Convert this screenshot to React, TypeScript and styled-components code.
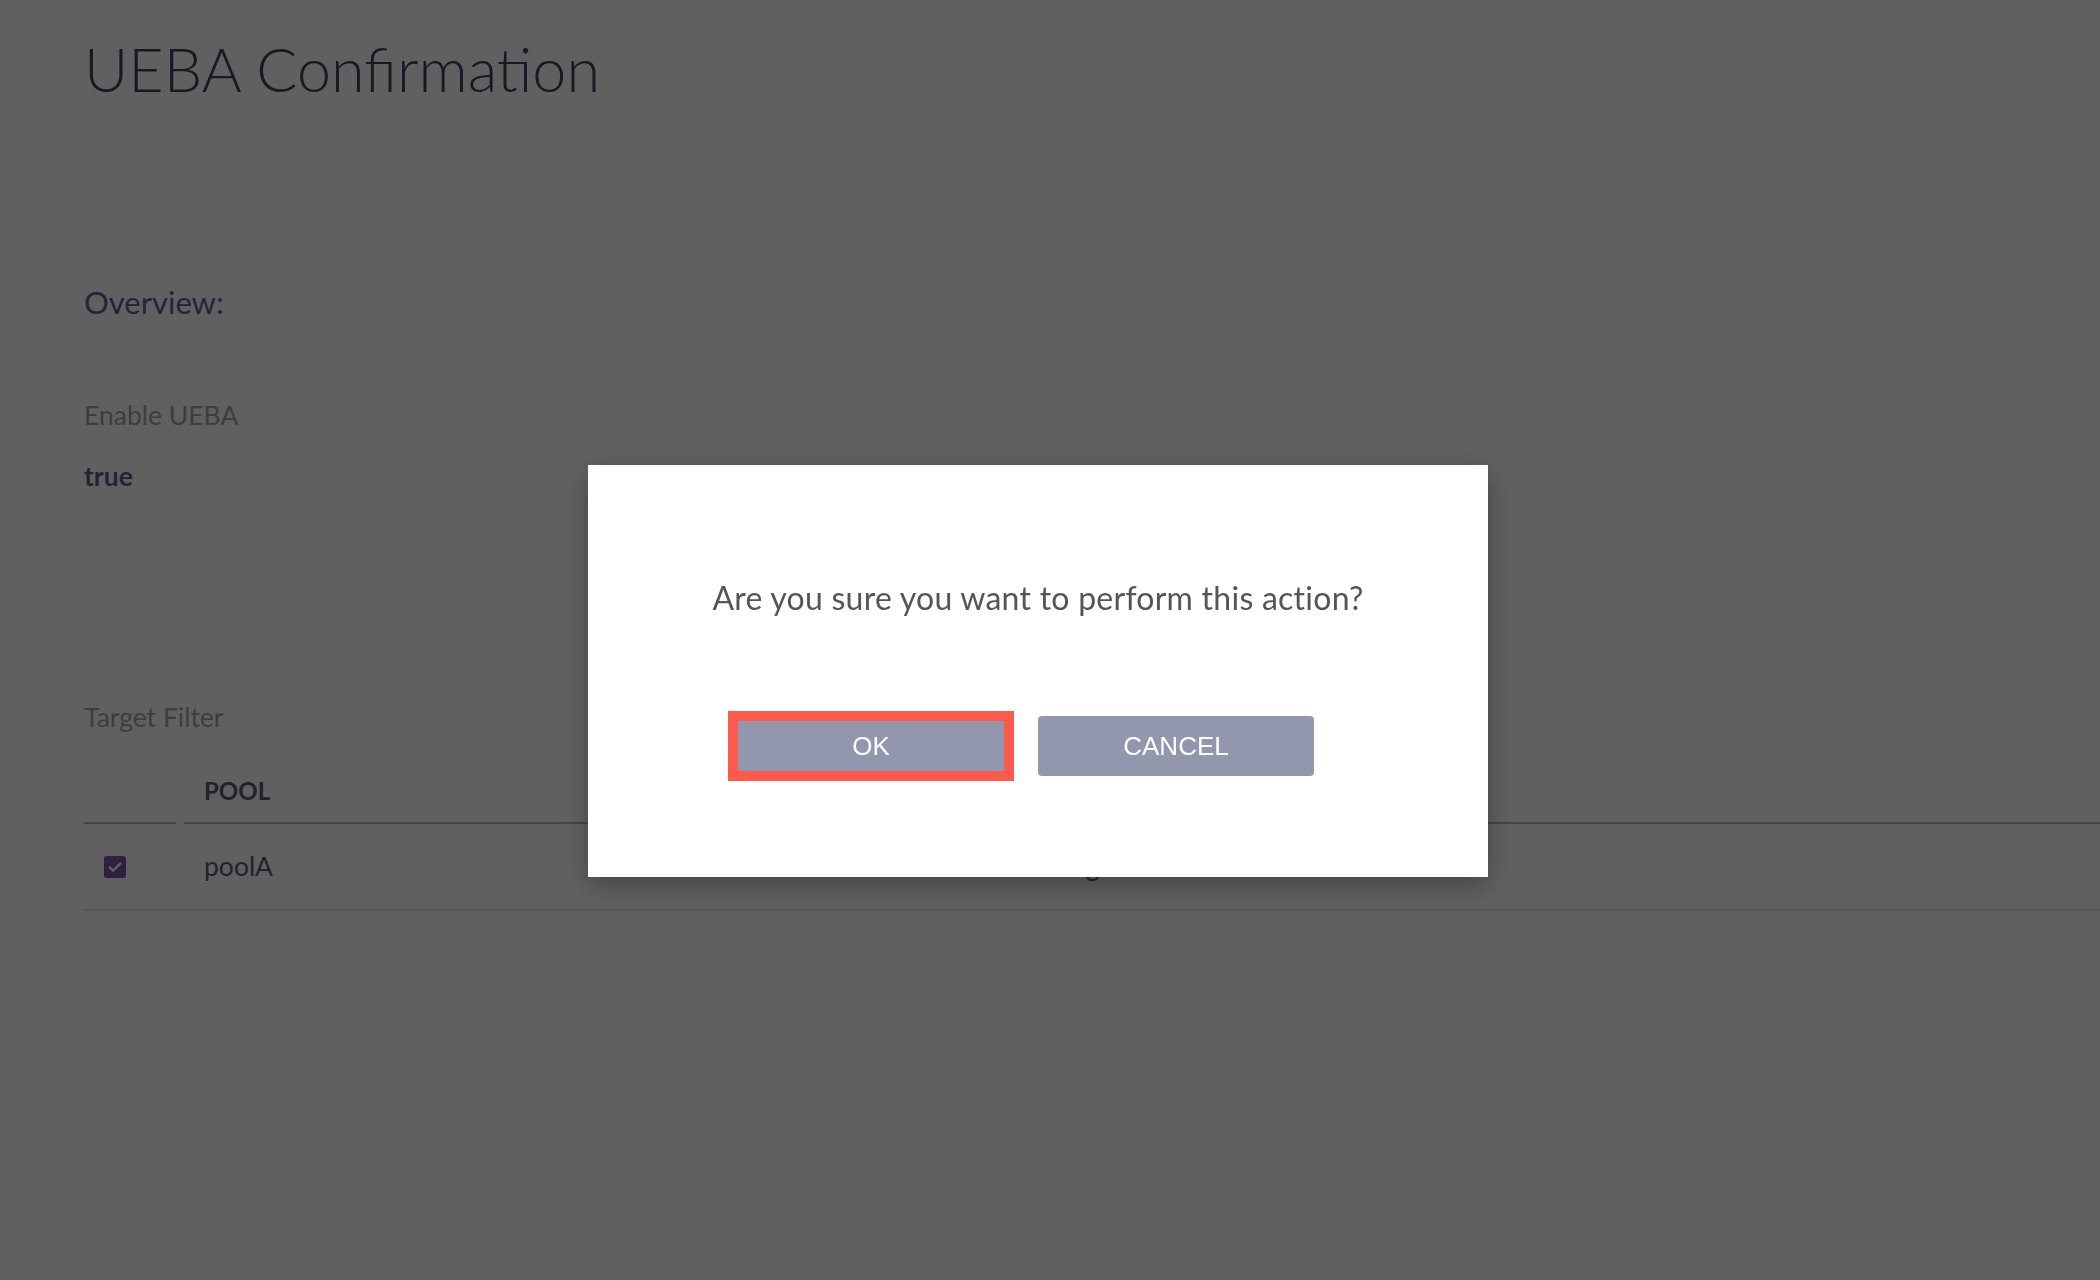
import React from "react";
import styled, { createGlobalStyle } from "styled-components";

// the page sits under a dark scrim, so the page colours below are the
// un-dimmed ones; the scrim takes them down to what the screenshot shows
const GlobalStyle = createGlobalStyle`
  html,
  body {
    margin: 0;
    padding: 0;
    background: #ffffff;
  }

  body {
    font-family: Lato, "Open Sans", sans-serif;
  }
`;

const Page = styled.main`
  box-sizing: border-box;
  min-height: 1280px;
  padding: 33px 0 0 84px;
`;

const Title = styled.h1`
  margin: 0;
  font-size: 61px;
  font-weight: 300;
  line-height: 72px;
  color: #44445f;
`;

const SectionTitle = styled.h2`
  margin: 179px 0 0;
  font-size: 31px;
  font-weight: 400;
  line-height: 36px;
  color: #5c6690;
`;

const FieldLabel = styled.div<{ $gap: number }>`
  margin-top: ${(props) => props.$gap}px;
  font-size: 26.5px;
  line-height: 31px;
  color: #a4a4a4;
`;

const FieldValue = styled.div`
  margin-top: 30px;
  font-size: 26.5px;
  font-weight: 700;
  line-height: 31px;
  color: #5e6088;
`;

const Table = styled.div`
  margin-top: 43px;
`;

const HeaderRow = styled.div`
  display: grid;
  grid-template-columns: 92px 848px 1fr;
  column-gap: 8px;
`;

const HeaderCell = styled.div`
  height: 46px;
  padding-left: 20px;
  font-size: 24px;
  font-weight: 700;
  line-height: 29px;
  color: #5a5a78;
  border-bottom: 2px solid #b8b8b8;
`;

const BodyRow = styled.div`
  display: grid;
  grid-template-columns: 92px 848px 1fr;
  column-gap: 8px;
  align-items: center;
  height: 85px;
  border-bottom: 2px solid #e8e8e8;
`;

const BodyCell = styled.div`
  padding-left: 20px;
  font-size: 26.5px;
  line-height: 31px;
  color: #5a5a78;
`;

const CheckBox = styled.span`
  display: flex;
  align-items: center;
  justify-content: center;
  width: 22px;
  height: 22px;
  background: #7a55a8;
  border-radius: 3px;
`;

const Scrim = styled.div`
  position: fixed;
  inset: 0;
  display: flex;
  align-items: flex-start;
  justify-content: center;
  box-sizing: border-box;
  padding: 465px 24px 0 0;
  background: rgba(0, 0, 0, 0.624);
`;

const Dialog = styled.div`
  box-sizing: border-box;
  width: 900px;
  height: 412px;
  padding-top: 115px;
  text-align: center;
  background: #ffffff;
  box-shadow: 0 8px 24px rgba(0, 0, 0, 0.3);
`;

const Message = styled.p`
  margin: 0 0 100px;
  font-size: 32px;
  font-weight: 400;
  line-height: 36px;
  letter-spacing: 0.25px;
  color: #555555;
`;

const Actions = styled.div`
  display: flex;
  justify-content: center;
`;

const ActionButton = styled.button<{ $highlighted?: boolean }>`
  width: 276px;
  height: 60px;
  margin: 0 29px 0 0;
  padding: 0;
  font-family: "Liberation Sans", Arial, sans-serif;
  font-size: 26px;
  color: #ffffff;
  background: #9297ae;
  border: none;
  border-radius: ${(props) => (props.$highlighted ? "0" : "4px")};
  box-shadow: ${(props) =>
    props.$highlighted
      ? "0 0 0 5px #fe5a4c, inset 0 0 0 5px #fe5a4c"
      : "none"};
  cursor: pointer;
`;

const App = () => (
  <>
    <GlobalStyle />
    <Page>
      <Title>UEBA Confirmation</Title>
      <SectionTitle>Overview:</SectionTitle>
      <FieldLabel $gap={80}>Enable UEBA</FieldLabel>
      <FieldValue>true</FieldValue>
      <FieldLabel $gap={210}>Target Filter</FieldLabel>
      <Table>
        <HeaderRow>
          <HeaderCell />
          <HeaderCell>POOL</HeaderCell>
          <HeaderCell>TAG</HeaderCell>
        </HeaderRow>
        <BodyRow>
          <BodyCell>
            <CheckBox>
              <svg width="18" height="18" viewBox="0 0 24 24" fill="none">
                <path
                  d="M5 12.5l4.5 4.5L19 7.5"
                  stroke="#ffffff"
                  strokeWidth="3.2"
                  strokeLinecap="round"
                  strokeLinejoin="round"
                />
              </svg>
            </CheckBox>
          </BodyCell>
          <BodyCell>poolA</BodyCell>
          <BodyCell>Tag</BodyCell>
        </BodyRow>
      </Table>
    </Page>
    <Scrim>
      <Dialog role="dialog">
        <Message>Are you sure you want to perform this action?</Message>
        <Actions>
          <ActionButton $highlighted>OK</ActionButton>
          <ActionButton>CANCEL</ActionButton>
        </Actions>
      </Dialog>
    </Scrim>
  </>
);

export default App;
